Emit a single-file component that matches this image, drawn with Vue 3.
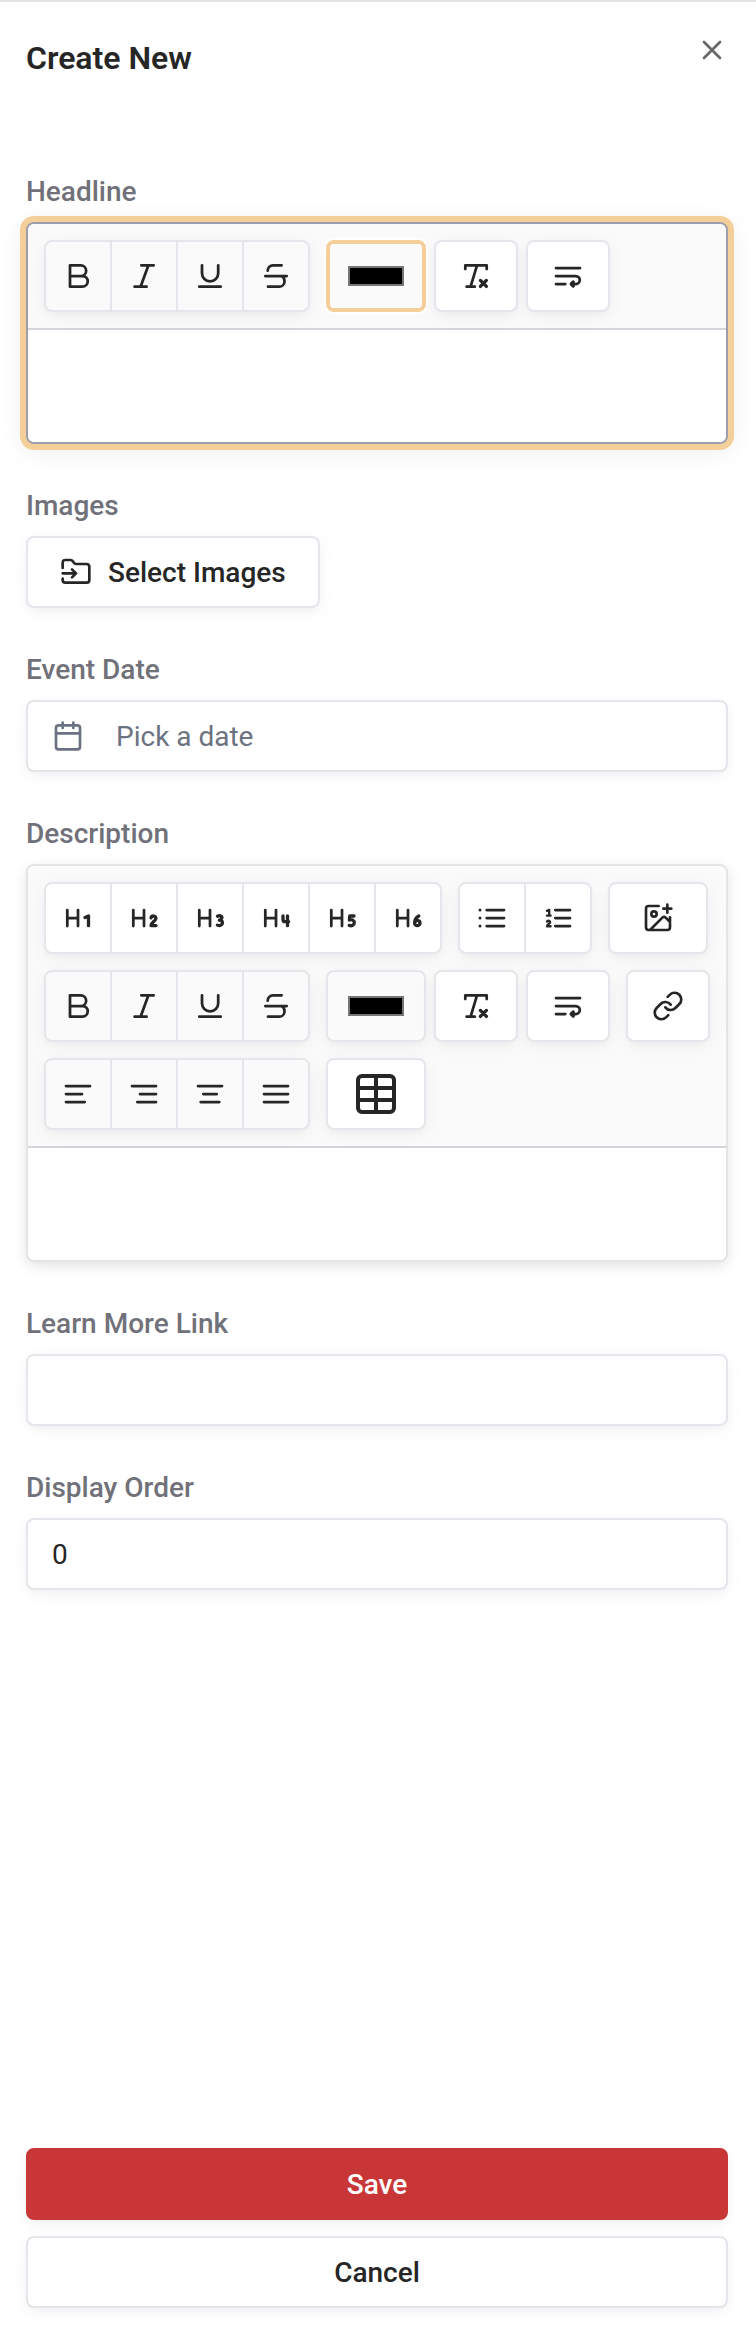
<script setup>
import { ref, h } from 'vue'

const headline = ref('')
const description = ref('')
const link = ref('')
const order = ref('0')
const headlineColor = ref('#000000')
const descriptionColor = ref('#000000')

// Toolbar glyphs on a 32-unit grid; a second path is the heavier accent stroke.
const H = 'M5.3 8v16M16 8v16M5.3 16H16'
const glyphs = {
  Bold: ['M8 5.3h10.8a5.35 5.35 0 0 1 0 10.7H8zM8 16h12.4a5.35 5.35 0 0 1 0 10.7H8z'],
  Italic: ['M13.3 5.3h12.4M6.6 26.7h12M20.4 5.3 12.6 26.7'],
  Underline: ['M8 5.3v8a8.1 8.1 0 0 0 16.2 0v-8M5.3 26.7h21.4'],
  Strikethrough: ['M21.6 5.3H13a5.3 5.3 0 0 0-5.3 5.4M5.3 16h21.4M8 26.7h11.2a5.3 5.3 0 0 0 5.3-5.3c0-2.4-1-4.5-3-5.4'],
  'Heading 1': [H, 'M23 15.6 26.5 14V23.7'],
  'Heading 2': [H, 'M23 15.8a2.5 2.5 0 0 1 4.9.7c0 2.3-4.9 4.1-4.9 7.1H28'],
  'Heading 3': [H, 'M23.5 14.2c2.800-1.200 5 .2 4.200 2.100-.5 1.200-1.400 1.700-2.400 1.900 2 0 3.100 1.200 3.100 2.700 0 2.400-2.700 3.400-5 2.200'],
  'Heading 4': [H, 'M23 14v3.400c0 1.600.9 2.300 2.200 2.300h3.400M27.500 14v9.700'],
  'Heading 5': [H, 'M28 14h-4.300l-.3 4c2.500-.9 5.100.3 4.900 2.900-.2 2.500-2.900 3.400-5.100 2.500'],
  'Heading 6': [H, 'M26.800 14c-2.300 1.300-4.200 3.900-4.200 7a2.700 2.700 0 1 0 5.400 0c0-2.800-3.400-3.500-5-1'],
  'Bullet list': ['M10.7 8H28M10.7 16H28M10.7 24H28'],
  'Numbered list': ['M13.3 8H28M13.3 16H28M13.3 24H28'],
  'Clear formatting': ['M5.3 9V5.3h21.400V9M17 5.3 10.600 26.700M6.600 26.700h8.200', 'M20.400 20.400l6 6M26.400 20.400l-6 6'],
  'Line break': ['M4 8h24M4 16h19.8a4 4 0 0 1 0 8H20M4 24h9.3', 'M21.2 22 19.200 24l2 2z'],
  'Align left': ['M4 8h24M4 16h16M4 24h18.7'],
  'Align right': ['M4 8h24M12 16h16M9.3 24H28'],
  'Align center': ['M4 8h24M9.3 16h13.4M6.7 24h18.6'],
  Justify: ['M4 8h24M4 16h24M4 24h24'],
}

const Glyph = (props) =>
  h('svg', {
    width: 32, height: 32, viewBox: '0 0 32 32', fill: 'none', stroke: 'currentColor',
    'stroke-linecap': 'round', 'stroke-linejoin': 'round', 'aria-hidden': 'true',
  }, [
    ...glyphs[props.name].map((d, i) => h('path', { d, 'stroke-width': i ? 3.3 : 2.75 })),
    ...(props.name === 'Bullet list'
      ? [8, 16, 24].map((cy) => h('circle', { cx: 4, cy, r: 1.5, fill: 'currentColor', stroke: 'none' }))
      : []),
    ...(props.name === 'Numbered list'
      ? [h('path', { 'stroke-width': 2.4, d: 'M5 8.8 7.2 8v5.6M5 13.6h3.6M5 19.6c1-1.4 3.3-.8 3.1.7-.1 1.200-3.1 2.300-3.1 3.900h3.600' })]
      : []),
  ])
Glyph.props = ['name']

const marks = ['Bold', 'Italic', 'Underline', 'Strikethrough']
const headings = [1, 2, 3, 4, 5, 6].map((n) => `Heading ${n}`)
const lists = ['Bullet list', 'Numbered list']
const aligns = ['Align left', 'Align right', 'Align center', 'Justify']
</script>

<template>
  <form class="sheet" @submit.prevent>
    <header class="head">
      <h1>Create New</h1>
      <button type="button" class="close" aria-label="Close">
        <svg class="ico" viewBox="0 0 24 24"><path d="M18 6 6 18M6 6l12 12" /></svg>
      </button>
    </header>

    <div class="fields">
      <div class="field">
        <label for="headline">Headline</label>
        <div class="editor focused">
          <div class="toolbar">
            <div class="row">
              <div class="group">
                <button v-for="n in marks" :key="n" type="button" :aria-label="n"><Glyph :name="n" /></button>
              </div>
              <div class="cluster">
                <span class="tool wide tint active"><input v-model="headlineColor" type="color" aria-label="Headline text color" /></span>
                <button type="button" class="tool" aria-label="Clear formatting"><Glyph name="Clear formatting" /></button>
                <button type="button" class="tool" aria-label="Line break"><Glyph name="Line break" /></button>
              </div>
            </div>
          </div>
          <textarea id="headline" v-model="headline"></textarea>
        </div>
      </div>

      <div class="field">
        <label for="images">Images</label>
        <button id="images" type="button" class="btn pick">
          <svg class="ico" viewBox="0 0 24 24">
            <path d="M2 9V5a2 2 0 0 1 2-2h3.9a2 2 0 0 1 1.69.9l.81 1.2a2 2 0 0 0 1.67.9H20a2 2 0 0 1 2 2v10a2 2 0 0 1-2 2H4a2 2 0 0 1-2-2v-1M2 13h10M9 16l3-3-3-3" />
          </svg>
          Select Images
        </button>
      </div>

      <div class="field">
        <label for="date">Event Date</label>
        <button id="date" type="button" class="control date">
          <svg class="ico" viewBox="0 0 24 24">
            <rect x="3" y="4" width="18" height="18" rx="2" /><path d="M16 2v4M8 2v4M3 10h18" />
          </svg>
          Pick a date
        </button>
      </div>

      <div class="field">
        <label for="description">Description</label>
        <div class="editor">
          <div class="toolbar">
            <div class="row">
              <div class="group solid">
                <button v-for="n in headings" :key="n" type="button" :aria-label="n"><Glyph :name="n" /></button>
              </div>
              <div class="group solid">
                <button v-for="n in lists" :key="n" type="button" :aria-label="n"><Glyph :name="n" /></button>
              </div>
              <button type="button" class="tool wide" aria-label="Insert image">
                <svg class="ico" viewBox="0 0 24 24">
                  <path d="M16 5h6M19 2v6M21 11.5V19a2 2 0 0 1-2 2H5a2 2 0 0 1-2-2V5a2 2 0 0 1 2-2h7.5M21 15l-3.086-3.086a2 2 0 0 0-2.828 0L6 21" />
                  <circle cx="9" cy="9" r="2" />
                </svg>
              </button>
            </div>
            <div class="row">
              <div class="group">
                <button v-for="n in marks" :key="n" type="button" :aria-label="n"><Glyph :name="n" /></button>
              </div>
              <div class="cluster">
                <span class="tool wide tint"><input v-model="descriptionColor" type="color" aria-label="Description text color" /></span>
                <button type="button" class="tool" aria-label="Clear formatting"><Glyph name="Clear formatting" /></button>
                <button type="button" class="tool" aria-label="Line break"><Glyph name="Line break" /></button>
              </div>
              <button type="button" class="tool" aria-label="Insert link">
                <svg class="ico" viewBox="0 0 24 24">
                  <path d="M10 13a5 5 0 0 0 7.54.54l3-3a5 5 0 0 0-7.07-7.07l-1.72 1.71M14 11a5 5 0 0 0-7.54-.54l-3 3a5 5 0 0 0 7.07 7.07l1.71-1.71" />
                </svg>
              </button>
            </div>
            <div class="row">
              <div class="group">
                <button v-for="n in aligns" :key="n" type="button" :aria-label="n"><Glyph :name="n" /></button>
              </div>
              <button type="button" class="tool wide" aria-label="Insert table">
                <svg class="ico large" viewBox="0 0 24 24">
                  <rect x="3" y="3" width="18" height="18" rx="2" /><path d="M12 3v18M3 9h18M3 15h18" />
                </svg>
              </button>
            </div>
          </div>
          <textarea id="description" v-model="description"></textarea>
        </div>
      </div>

      <div class="field">
        <label for="link">Learn More Link</label>
        <input id="link" v-model="link" type="text" class="control" />
      </div>

      <div class="field">
        <label for="order">Display Order</label>
        <input id="order" v-model="order" type="text" inputmode="numeric" class="control" />
      </div>
    </div>

    <footer class="actions">
      <button type="submit" class="btn primary">Save</button>
      <button type="button" class="btn">Cancel</button>
    </footer>
  </form>
</template>

<style>
body {
  margin: 0;
  background: #fff;
}
</style>

<style scoped>
.sheet {
  --line: #e5e5eb;
  --ring: #f4cf99;
  --shadow: 0 4px 8px -2px rgba(0, 0, 0, 0.04), 0 4px 20px rgba(0, 0, 0, 0.04);
  box-sizing: border-box;
  min-height: 100vh;
  display: flex;
  flex-direction: column;
  padding: 40px 28px 20px 26px;
  border-top: 2px solid #e2e2e2;
  font-family: Roboto, "Liberation Sans", sans-serif;
  font-size: 28px;
  color: #262626;
}
.sheet * {
  box-sizing: border-box;
}
button,
input,
textarea {
  margin: 0;
  padding: 0;
  font: inherit;
  color: inherit;
}
.head {
  display: flex;
  justify-content: space-between;
  align-items: flex-start;
  margin-bottom: 104px;
}
h1 {
  margin: 0;
  font-size: 32px;
  line-height: 32px;
  font-weight: 600;
}
.close {
  display: flex;
  margin-top: -8px;
  border: 0;
  background: none;
  color: #676767;
}
.ico {
  width: 32px;
  height: 32px;
  fill: none;
  stroke: currentColor;
  stroke-width: 2;
  stroke-linecap: round;
  stroke-linejoin: round;
}
.ico.large {
  width: 48px;
  height: 48px;
}
.fields {
  display: flex;
  flex-direction: column;
  gap: 48px;
}
.field {
  display: flex;
  flex-direction: column;
  gap: 16px;
}
label {
  line-height: 28px;
  font-weight: 500;
  color: #71717a;
}
.editor {
  border: 2px solid #e4e4e4;
  border-radius: 8px;
  background: #fff;
  box-shadow: 0 4px 12px rgba(0, 0, 0, 0.08), 0 4px 20px rgba(0, 0, 0, 0.04);
}
.editor.focused {
  border-color: #9c9fab;
  box-shadow: 0 0 0 6px var(--ring), 0 4px 24px 4px rgba(0, 0, 0, 0.07);
}
.toolbar {
  display: flex;
  flex-direction: column;
  gap: 16px;
  padding: 16px;
  border-bottom: 2px solid #d4d4da;
  border-radius: 6px 6px 0 0;
  background: #fafafa;
}
.row {
  display: flex;
  gap: 16px;
}
.cluster {
  display: flex;
  gap: 8px;
}
.group {
  display: flex;
  border: 2px solid var(--line);
  border-radius: 8px;
  box-shadow: var(--shadow);
  background: #fafafa;
}
.group.solid {
  background: #fff;
}
.group button {
  display: flex;
  align-items: center;
  justify-content: center;
  width: 64px;
  height: 68px;
  border: 0;
  background: none;
}
.group button + button {
  width: 66px;
  border-left: 2px solid var(--line);
}
.tool {
  display: flex;
  align-items: center;
  justify-content: center;
  width: 84px;
  height: 72px;
  border: 2px solid var(--line);
  border-radius: 8px;
  background: #fff;
  box-shadow: var(--shadow);
}
.tool.wide {
  width: 100px;
}
.tool.tint {
  background: #fafafa;
}
.tool.active {
  border: 4px solid var(--ring);
  box-shadow: 0 0 0 2px #fff;
}
input[type="color"] {
  width: 56px;
  height: 20px;
  border: 0;
  background: none;
  appearance: none;
}
input[type="color"]::-webkit-color-swatch-wrapper {
  padding: 0;
}
input[type="color"]::-webkit-color-swatch {
  border: 2px solid #767676;
  border-radius: 0;
}
textarea {
  display: block;
  width: 100%;
  height: 112px;
  padding: 16px 24px;
  border: 0;
  border-radius: 0 0 6px 6px;
  outline: 0;
  resize: none;
  background: #fff;
}
.control,
.btn {
  width: 100%;
  height: 72px;
  padding: 0 24px;
  border: 2px solid var(--line);
  border-radius: 8px;
  background: #fff;
  box-shadow: var(--shadow);
}
.date {
  display: flex;
  align-items: center;
  gap: 32px;
  color: #6b7280;
}
.btn {
  display: flex;
  align-items: center;
  justify-content: center;
  gap: 16px;
  padding: 0 32px;
  font-weight: 500;
}
.pick {
  width: auto;
  align-self: flex-start;
}
.primary {
  border-color: #c93638;
  background: #c93638;
  color: #fff;
}
.actions {
  display: flex;
  flex-direction: column;
  gap: 16px;
  margin-top: auto;
  padding-top: 48px;
}
</style>
